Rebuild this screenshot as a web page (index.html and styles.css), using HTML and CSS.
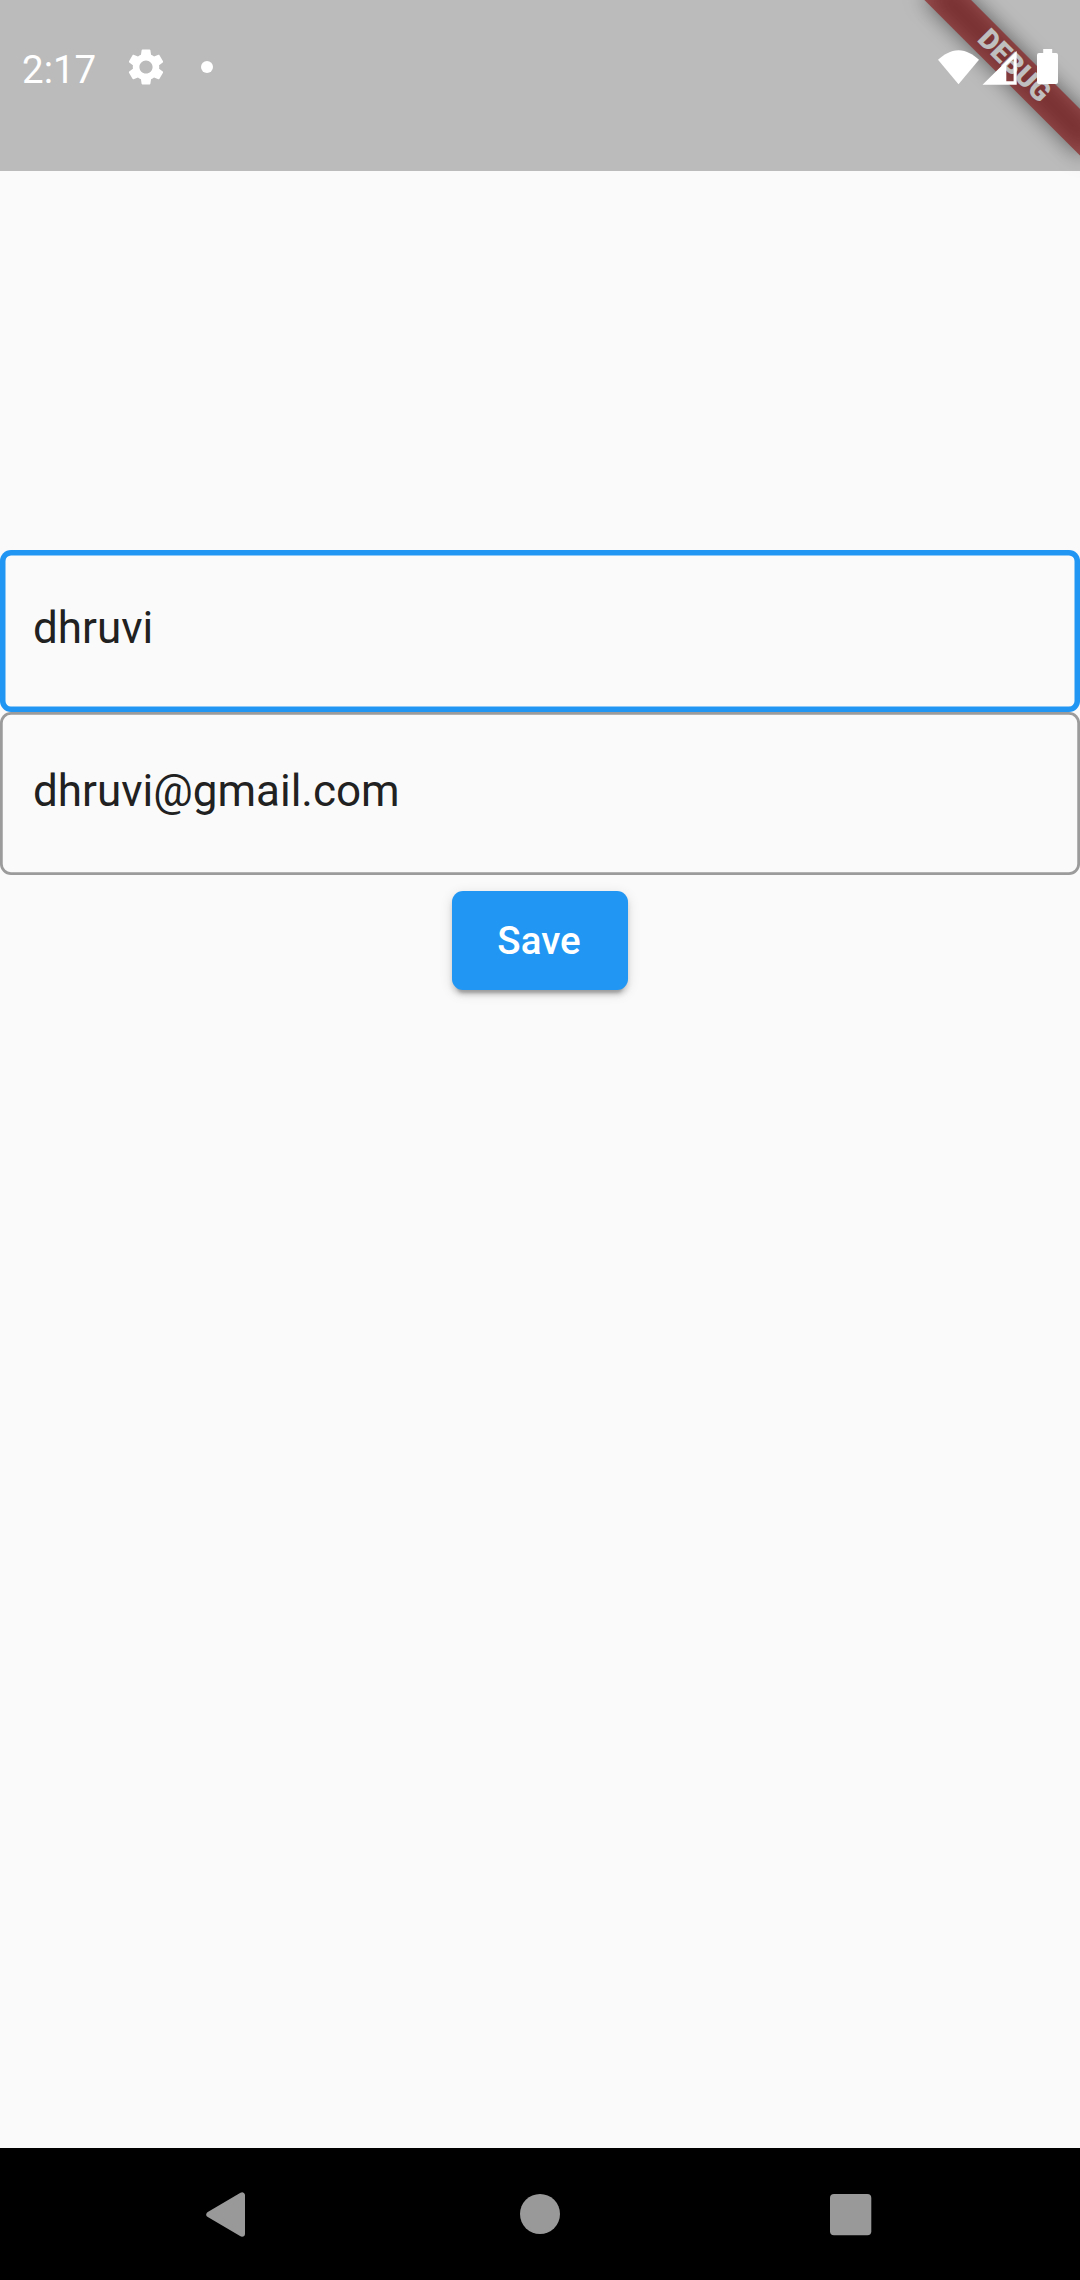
FILE: index.html
```html
<!DOCTYPE html>
<html lang="en">
<head>
<meta charset="utf-8">
<title>Profile</title>
<link rel="stylesheet" href="styles.css">
</head>
<body>
<div class="screen">
  <div class="banner-clip"><div class="banner"><span class="banner-text">DEBUG</span></div></div>
  <header class="status">
    <span class="clock">2:17</span>
    <svg class="gear" viewBox="0 0 24 24"><path d="M19.14 12.94c.04-.3.06-.61.06-.94 0-.32-.02-.64-.07-.94l2.03-1.58c.18-.14.23-.41.12-.61l-1.92-3.32c-.12-.22-.37-.29-.59-.22l-2.39.96c-.5-.38-1.03-.7-1.62-.94l-.36-2.54c-.04-.24-.24-.41-.48-.41h-3.84c-.24 0-.43.17-.47.41l-.36 2.54c-.59.24-1.13.57-1.62.94l-2.39-.96c-.22-.08-.47 0-.59.22L2.74 8.87c-.12.21-.08.47.12.61l2.03 1.58c-.05.3-.09.63-.09.94s.02.64.07.94l-2.03 1.58c-.18.14-.23.41-.12.61l1.92 3.32c.12.22.37.29.59.22l2.39-.96c.5.38 1.03.7 1.62.94l.36 2.54c.05.24.24.41.48.41h3.84c.24 0 .44-.17.47-.41l.36-2.54c.59-.24 1.13-.56 1.62-.94l2.39.96c.22.08.47 0 .59-.22l1.92-3.32c.12-.22.07-.47-.12-.61l-2.01-1.58zM12 15.6c-1.98 0-3.6-1.62-3.6-3.6s1.62-3.6 3.6-3.6 3.6 1.62 3.6 3.6-1.62 3.6-3.6 3.6z"/></svg>
    <span class="dot"></span>
    <svg class="tray" viewBox="0 0 124 40">
      <path d="M22.5 38.2 2 13.8C7.5 8.800 14.6 4.2 22.5 4.2S37.5 8.800 43 13.8Z"/>
      <path fill-rule="evenodd" d="M46.5 38.7 80.7 5V38.7ZM70.3 19.5V35.2H77.6V12.8Z"/>
      <path d="M107.2 3h9v4h3.8a2 2 0 0 1 2 2v27a2 2 0 0 1-2 2h-17a2 2 0 0 1-2-2V9a2 2 0 0 1 2-2h4.2Z"/>
    </svg>
  </header>
  <main class="form">
    <input class="field focused" type="text" value="dhruvi" aria-label="Name">
    <input class="field" type="text" value="dhruvi@gmail.com" aria-label="Email">
    <button class="save">Save</button>
  </main>
  <nav class="nav">
    <svg class="key back" viewBox="0 0 48 48"><path d="M40 5.3V43.7L7.3 24.5Z"/></svg>
    <svg class="key" viewBox="0 0 48 48"><circle cx="24" cy="24" r="20"/></svg>
    <svg class="key" viewBox="0 0 48 48"><rect x="0" y="4" width="41.3" height="41.3" rx="4"/></svg>
  </nav>
</div>
</body>
</html>
```
FILE: styles.css
```css
* { box-sizing: border-box; }
body { margin: 0; font-family: Roboto, sans-serif; }
.screen {
  position: relative;
  display: flex;
  flex-direction: column;
  width: 1080px;
  height: 2280px;
  background: #fafafa;
  overflow: hidden;
}
/* Corner ribbon, beneath the translucent status bar */
.banner-clip {
  position: absolute;
  top: 0;
  right: 0;
  width: 300px;
  height: 300px;
  overflow: hidden;
}
.banner {
  position: absolute;
  left: 190px;
  top: 77px;
  width: 220px;
  height: 33px;
  transform-origin: 110px -77px;
  transform: rotate(45deg);
  text-align: center;
}
.banner::before,
.banner::after {
  content: "";
  position: absolute;
  inset: 0;
}
.banner::before { background: rgba(0, 0, 0, .5); filter: blur(10.9px); }
.banner::after { background: rgba(183, 28, 28, .627); }
.banner-text {
  position: relative;
  z-index: 1;
  display: block;
  font-size: 28.05px;
  font-weight: 900;
  line-height: 31px;
  color: #fff;
}
.status {
  position: relative;
  display: flex;
  align-items: flex-start;
  height: 171px;
  padding: 0 20px 0 22px;
  background: rgba(0, 0, 0, .25);
  color: #fff;
  fill: #fff;
}
.clock { width: 102.4px; padding-top: 47px; font-size: 38.5px; line-height: 46px; }
.gear { width: 44px; height: 44px; margin-top: 45.3px; }
.dot { width: 12px; height: 12px; margin: 61px 0 0 32.6px; border-radius: 50%; background: #fff; }
.tray { width: 124px; height: 40px; margin: 46px 0 0 auto; }
.form {
  flex: 1;
  display: flex;
  flex-direction: column;
  align-items: center;
  padding-top: 379px;
}
.field {
  width: 100%;
  height: 162.25px;
  padding: 0 33px 5px;
  border: 0;
  border-radius: 11px;
  outline: 0;
  background: none;
  box-shadow: inset 0 0 0 2.75px #9b9b9b;
  font: 44px Roboto, sans-serif;
  color: #212121;
}
.field.focused {
  padding-bottom: 6px;
  box-shadow: inset 0 0 0 5.5px #2196f3;
}
.save {
  width: 176px;
  height: 99px;
  margin-top: 16.5px;
  padding: 0 2px 0 0;
  border: 0;
  border-radius: 11px;
  background: #2196f3;
  box-shadow: 0 8px 3px -5px rgba(0, 0, 0, .2), 0 5px 5px rgba(0, 0, 0, .14), 0 3px 13px rgba(0, 0, 0, .12);
  font: 500 38.5px Roboto, sans-serif;
  color: #fff;
}
.nav {
  display: flex;
  justify-content: space-between;
  align-items: center;
  height: 132px;
  padding: 0 202px;
  background: #000;
  fill: #999;
}
.key { width: 48px; height: 48px; }
.back { stroke: #999; stroke-width: 6; stroke-linejoin: round; }
```
